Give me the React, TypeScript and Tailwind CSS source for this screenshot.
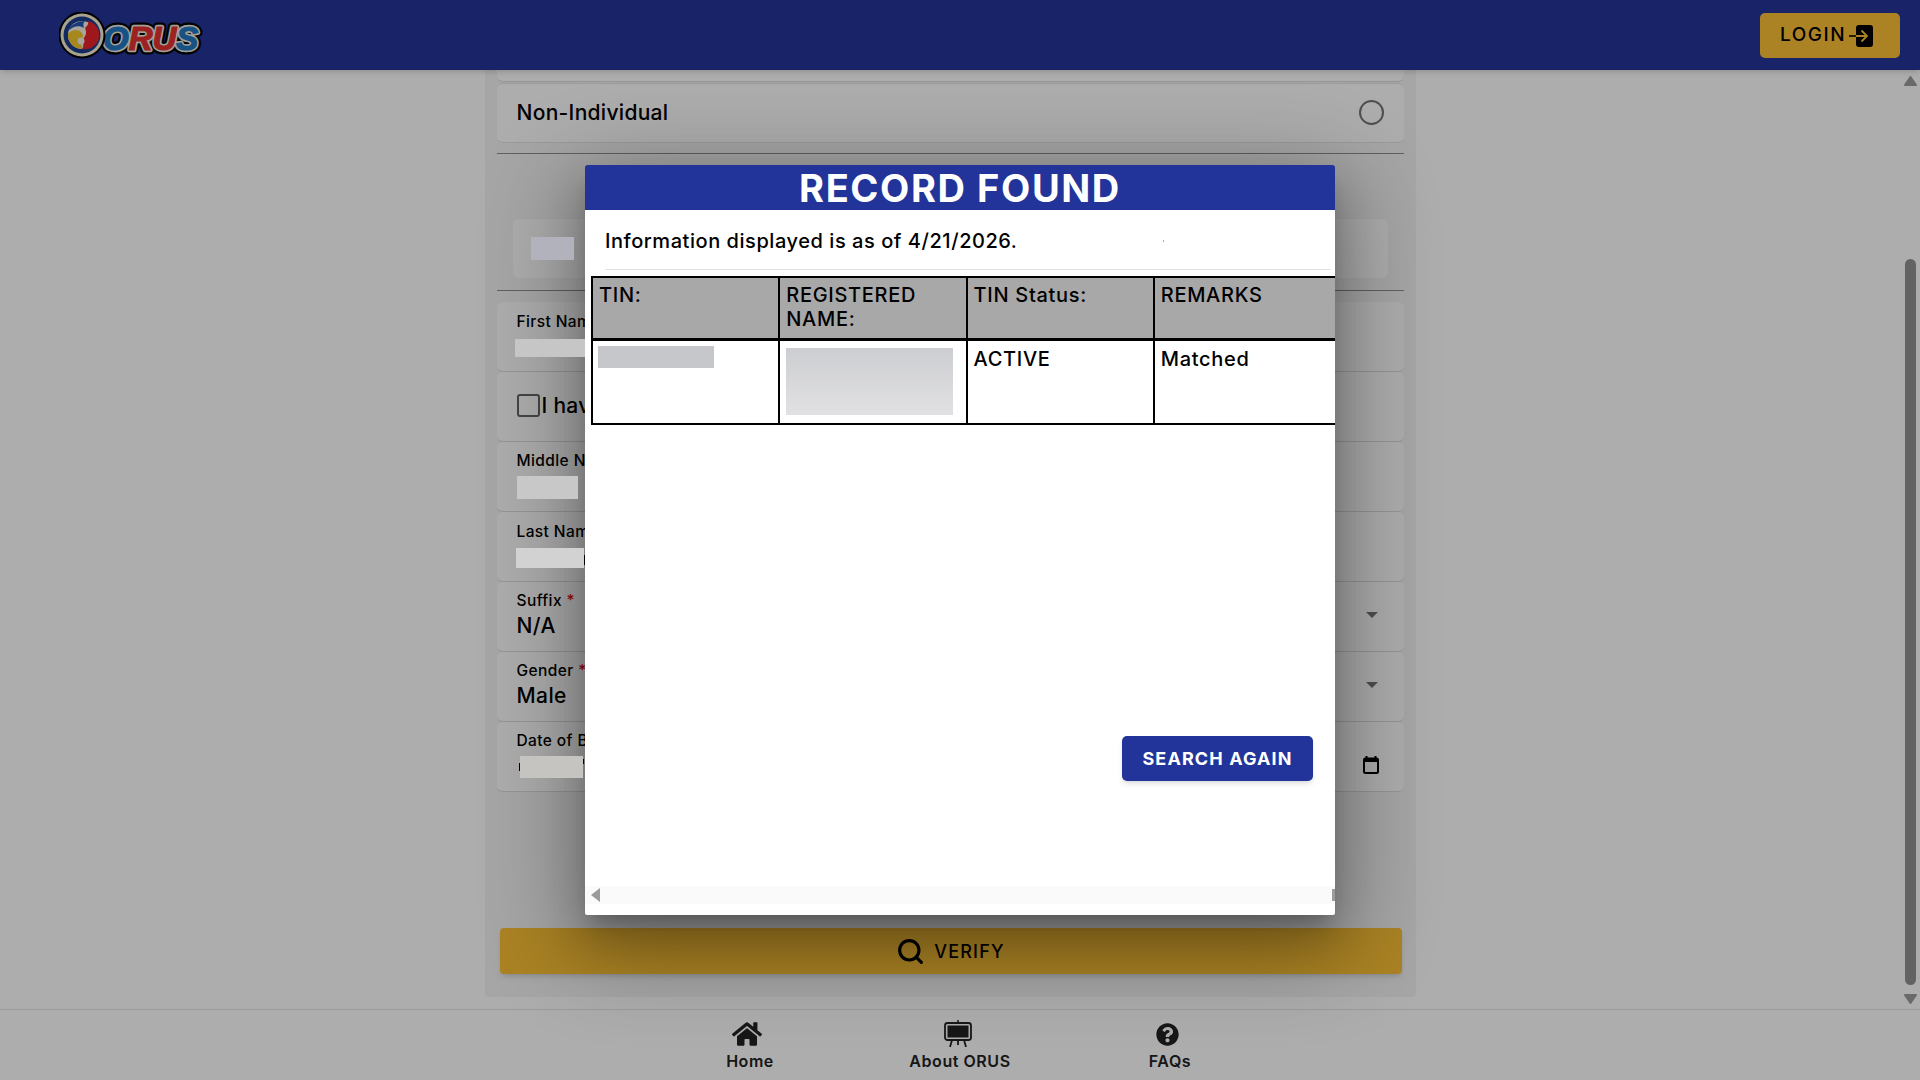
import type { ReactNode } from "react";
import { FaHome, FaQuestionCircle } from "react-icons/fa";
import { Search } from "lucide-react";

const Logo = () => (
  <svg width="146" height="47" viewBox="0 0 146 47" aria-label="ORUS">
    <defs>
      <text id="orus-outline" x="44" y="38" fontFamily="'Liberation Sans', sans-serif" fontWeight="700" fontStyle="italic" fontSize="33" strokeLinejoin="round">
        ORUS
      </text>
    </defs>
    <use href="#orus-outline" fill="#000" stroke="#000" strokeWidth="9" />
    <use href="#orus-outline" fill="#f1efe2" stroke="#f1efe2" strokeWidth="4.5" />
    <text x="44" y="38" fontFamily="'Liberation Sans', sans-serif" fontWeight="700" fontStyle="italic" fontSize="33" strokeWidth="1.2">
      <tspan fill="#2479c4" stroke="#2479c4">O</tspan>
      <tspan fill="#e63232" stroke="#e63232">RU</tspan>
      <tspan fill="#2479c4" stroke="#2479c4">S</tspan>
    </text>
    <circle cx="23" cy="23" r="23.5" fill="#000" />
    <circle cx="23" cy="23" r="21.5" fill="#f6f0d2" />
    <circle cx="23" cy="23" r="18.5" fill="#1d3f8f" />
    <circle cx="23" cy="23" r="14" fill="#f8f4e6" />
    <path d="M23 37a14 14 0 0 1-14-15c4-5 11-5 14-1 2 3 1 7-2 8 1 3 2 5 2 8z" fill="#f7c92c" />
    <path d="M23 37c3-4 0-6 1-10 3-3 4-7 2-11 2-2 4-4 3-7a14 14 0 0 1-6 28z" fill="#e8232a" />
    <path d="M9 19c3-7 10-10 17-10-2 2-2 4-1 7-5-3-11-2-16 3z" fill="#2356b8" />
    <circle cx="22" cy="29" r="3.5" fill="#f8f4e6" />
  </svg>
);

const LoginIcon = () => (
  <svg width="24" height="22" viewBox="0 0 24 22">
    <rect x="7" y="0" width="17" height="22" rx="3" fill="#000" />
    <path d="M0 11h7" stroke="#000" strokeWidth="1.6" />
    <path d="M7 11h10M12.5 5.5 18 11l-5.5 5.5" fill="none" stroke="#fdc235" strokeWidth="1.8" />
  </svg>
);

const BoardIcon = () => (
  <svg width="28" height="27" viewBox="0 0 28 27" fill="none" stroke="#222" className="mr-[5px]">
    <path d="M14 0v3" strokeWidth="1.5" />
    <rect x="1" y="3" width="26" height="17" rx="2.5" strokeWidth="1.8" />
    <rect x="3.5" y="5.5" width="21" height="12" fill="#222" stroke="none" />
    <path d="M8 20 6 27M14 20v5M20 20l2 7" strokeWidth="1.8" />
  </svg>
);

const CalendarIcon = () => (
  <svg width="16" height="18" viewBox="0 0 16 18" className="mt-[19px] mr-[25px]">
    <path d="M3.5 0v3M12.5 0v3" stroke="#000" strokeWidth="2" />
    <rect x="1" y="2.5" width="14" height="14.5" rx="1.5" fill="none" stroke="#000" strokeWidth="2" />
    <rect x="1" y="2.5" width="14" height="3.5" fill="#000" />
  </svg>
);

const Caret = () => (
  <svg width="12" height="6" viewBox="0 0 12 6" className="mr-[26px]">
    <path d="M0 0h12L6 6z" fill="#757575" />
  </svg>
);

const Row = ({ label, required, value, patch, right }: {
  label: string;
  required?: boolean;
  value?: string;
  patch?: ReactNode;
  right?: ReactNode;
}) => (
  <div className="flex h-[70px] items-center justify-between rounded-md border-b border-[#dcdcdc] bg-white pb-[2.5px] pl-5">
    <div className="flex flex-col">
      <div className="text-[15.5px] leading-[18px] font-medium tracking-[0.4px]">
        {label}
        {required && <span className="text-[#e01010]"> *</span>}
      </div>
      {value && <div className="mt-[4px] text-[21px] leading-[24px] font-medium tracking-[0.4px]">{value}</div>}
      {patch}
    </div>
    {right}
  </div>
);

const Scrollbar = () => (
  <div className="flex w-5 shrink-0 flex-col items-center pt-[6px]">
    <svg width="13" height="10" viewBox="0 0 13 10"><path d="M6.5 1 12 9H1z" fill="#9c9c9c" stroke="#9c9c9c" strokeWidth="2" strokeLinejoin="round" /></svg>
    <div className="mt-[173px] h-[726px] w-[11px] rounded-md bg-[#929292]" />
    <svg width="13" height="10" viewBox="0 0 13 10" className="mt-[9px]"><path d="M1 1h11L6.5 9z" fill="#9c9c9c" stroke="#9c9c9c" strokeWidth="2" strokeLinejoin="round" /></svg>
  </div>
);

const RecordDialog = () => (
  <div className="absolute inset-0 z-20 flex items-center justify-center bg-black/32">
    <div className="flex h-[750px] w-[750px] flex-col overflow-hidden rounded-[2px] bg-white shadow-[0_11px_15px_-7px_rgba(0,0,0,.2),0_24px_38px_3px_rgba(0,0,0,.14),0_24px_90px_14px_rgba(0,0,0,.32)]">
      <div className="flex h-[45px] shrink-0 items-center justify-center bg-[#22349a] pt-px text-[38px] font-bold tracking-[1.6px] text-white">
        RECORD FOUND
      </div>
      <div className="mr-1 ml-5 flex h-[60px] shrink-0 items-center justify-between border-b border-[#e2e2e2] pr-[167px] pt-[2px]">
        <p className="text-[20px] font-medium tracking-[0.55px]">Information displayed is as of 4/21/2026.</p>
        <span className="h-[2px] w-px bg-[#aaaaaa]" />
      </div>
      <div className="mt-[6px] ml-[6px] overflow-hidden">
        <table className="w-[751px] table-fixed border-collapse text-[20px] leading-[24px] font-medium tracking-[0.7px]">
          <thead>
            <tr className="h-[62px] border-b-[3px] border-black bg-[#a8a8a8]">
              {["TIN:", "REGISTERED NAME:", "TIN Status:", "REMARKS"].map((h) => (
                <th key={h} className="border-x-2 border-t-2 border-black px-[6px] pt-[5px] text-left align-top font-medium">{h}</th>
              ))}
            </tr>
          </thead>
          <tbody>
            <tr className="h-[85px]">
              <td className="border-2 border-black pt-[5px] pr-[6px] pl-[5px] align-top"><div className="h-[22px] w-[116px] bg-[#c6c7ca]" /></td>
              <td className="border-2 border-black px-[6px] pt-[7px] align-top"><div className="h-[67px] w-[167px] bg-gradient-to-b from-[#cdced1] to-[#e1e1e3]" /></td>
              <td className="border-2 border-black px-[6px] pt-[6px] align-top">ACTIVE</td>
              <td className="border-2 border-black px-[6px] pt-[6px] align-top">Matched</td>
            </tr>
          </tbody>
        </table>
      </div>
      <div className="mt-[311px] flex justify-end pr-[22px]">
        <button className="flex h-[45px] w-[191px] items-center justify-center rounded-[5px] bg-[#22349a] text-[18px] font-bold tracking-[1.1px] text-white shadow-md">
          SEARCH AGAIN
        </button>
      </div>
      <div className="mt-[105px] flex h-[18px] items-center justify-between bg-[#fafafa] pl-[6px]">
        <svg width="9" height="14" viewBox="0 0 9 14"><path d="M9 0v14L0 7z" fill="#9b9b9b" /></svg>
        <div className="h-[12px] w-[3px] bg-[#9b9b9b]" />
      </div>
    </div>
  </div>
);

export default function App() {
  return (
    <div className="relative flex h-screen w-full flex-col overflow-hidden bg-white font-[Inter,sans-serif] text-black">
      <header className="z-10 flex h-[70px] shrink-0 items-center justify-between bg-[#243699] pr-5 pl-[59px] shadow-md">
        <Logo />
        <button className="flex h-[45px] w-[140px] items-center justify-center gap-[3px] rounded-[5px] bg-[#fdc235] pt-px pr-[7px] text-[19px] font-medium tracking-[1.5px]">
          LOGIN <LoginIcon />
        </button>
      </header>

      <main className="flex min-h-0 flex-1">
        <div className="flex flex-1 justify-center">
          <div className="h-[927px] w-[931px] rounded-b bg-[#f5f5f5] px-3">
            <div className="h-[12px] rounded-b-md border-b border-[#dcdcdc] bg-white" />
            <div className="mt-px flex h-[60px] items-center justify-between rounded-md border-y border-[#e4e4e4] bg-white pr-5 pb-[1px] pl-5">
              <span className="text-[21px] font-medium tracking-[0.3px]">Non-Individual</span>
              <span className="h-[25px] w-[25px] rounded-full border-2 border-[#757575]" />
            </div>
            <hr className="mt-[10px] border-[#8e8e8e]" />
            <div className="mx-4 mt-[65px] flex h-[59px] items-center rounded-md bg-white pl-[18px]">
              <div className="relative z-30 h-[23px] w-[43px] bg-[#b2b2bd]" />
            </div>
            <hr className="mt-3 border-[#8e8e8e]" />
            <div className="mt-[11px] flex flex-col">
              <Row label="First Name" patch={<div className="relative z-30 mt-[8px] -ml-[2px] h-[18px] w-[70px] bg-[#c6c6c6]" />} />
              <div className="flex h-[70px] items-center rounded-md border-b border-[#dcdcdc] bg-white pb-[2px] pl-5 text-[21px] font-medium tracking-[0.3px]">
                <span className="h-[23px] w-[23px] rounded-[3px] border-[2.5px] border-[#666666]" />
                <span className="ml-[2px]">I have no middle name</span>
              </div>
              <Row label="Middle Name" patch={<div className="relative z-30 mt-[6px] h-[23px] w-[61px] bg-[#c8c8c8]" />} />
              <Row
                label="Last Name"
                patch={
                  <div className="mt-[7px] -ml-[1px] flex items-end">
                    <div className="relative z-30 h-[20px] w-[68px] bg-[#d2d2d2]" />
                    <div className="mb-[3px] h-[10px] w-[1px] bg-black" />
                  </div>
                }
              />
              <Row label="Suffix" required value="N/A" right={<Caret />} />
              <Row label="Gender" required value="Male" right={<Caret />} />
              <Row
                label="Date of Birth"
                patch={
                  <div className="mt-[6px] ml-[2px] flex items-start">
                    <div className="mt-[7px] h-[8px] w-[1px] bg-black" />
                    <div className="relative z-30 h-[22px] w-[63px] bg-[#c6c4c1]" />
                    <div className="mt-[3px] h-[5px] w-[1px] bg-black" />
                  </div>
                }
                right={<CalendarIcon />}
              />
            </div>
            <button className="mt-[136px] ml-[3px] flex h-[46px] w-[902px] items-center justify-center gap-[9px] rounded-[4px] bg-[#fdc235] pt-px text-[18px] font-medium tracking-[1.2px] shadow-md">
              <Search size={29} strokeWidth={2.6} />
              VERIFY
            </button>
          </div>
        </div>
        <Scrollbar />
      </main>

      <nav className="flex h-[71px] shrink-0 justify-center border-t border-[#e4e4e4] bg-white text-[#222222]">
        <div className="grid w-[630px] grid-cols-3 text-center text-[16px] leading-[22px] font-semibold tracking-[0.55px]">
          <a className="flex flex-col items-center pt-[10px]">
            <FaHome className="mr-[6px] h-[28px] w-[30px]" />
            <span className="mt-[2px]">Home</span>
          </a>
          <a className="flex flex-col items-center pt-[10px]">
            <BoardIcon />
            <span className="mt-[3px]">About ORUS</span>
          </a>
          <a className="flex flex-col items-center pt-[13px]">
            <FaQuestionCircle className="mr-[5px] h-[23px] w-[23px]" />
            <span className="mt-[4px]">FAQs</span>
          </a>
        </div>
      </nav>

      <RecordDialog />
    </div>
  );
}
